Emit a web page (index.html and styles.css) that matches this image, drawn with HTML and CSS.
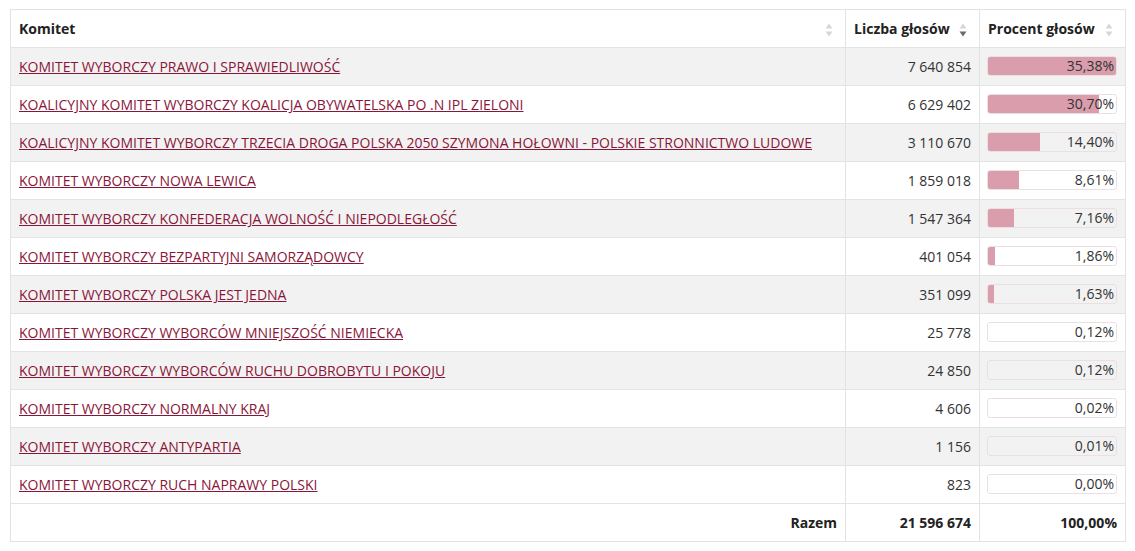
FILE: index.html
```html
<!DOCTYPE html>
<html lang="pl">
<head>
<meta charset="utf-8">
<title>Wyniki</title>
<link rel="stylesheet" href="styles.css">
</head>
<body>
<div class="wrap">
<table class="results">
  <colgroup>
    <col class="c-name">
    <col class="c-votes">
    <col class="c-pct">
  </colgroup>
  <thead>
    <tr>
      <th>Komitet<span class="sort"><svg viewBox="0 0 8 14" width="8" height="14"><path d="M4 0.5 L7.5 5.5 L0.5 5.5 Z" fill="#d7d7d7"/><path d="M4 13.5 L7.5 8.5 L0.5 8.5 Z" fill="#d7d7d7"/></svg></span></th>
      <th>Liczba głosów<span class="sort"><svg viewBox="0 0 8 14" width="8" height="14"><path d="M4 0.5 L7.5 5.5 L0.5 5.5 Z" fill="#d7d7d7"/><path d="M4 13.5 L7.5 8.5 L0.5 8.5 Z" fill="#6b6b6b"/></svg></span></th>
      <th>Procent głosów<span class="sort"><svg viewBox="0 0 8 14" width="8" height="14"><path d="M4 0.5 L7.5 5.5 L0.5 5.5 Z" fill="#d7d7d7"/><path d="M4 13.5 L7.5 8.5 L0.5 8.5 Z" fill="#d7d7d7"/></svg></span></th>
    </tr>
  </thead>
  <tbody>
    <tr><td><a href="#">KOMITET WYBORCZY PRAWO I SPRAWIEDLIWOŚĆ</a></td><td class="num">7 640 854</td><td class="pct"><div class="bar"><div class="fill" style="width:100%"></div><span>35,38%</span></div></td></tr>
    <tr><td><a href="#">KOALICYJNY KOMITET WYBORCZY KOALICJA OBYWATELSKA PO .N IPL ZIELONI</a></td><td class="num">6 629 402</td><td class="pct"><div class="bar"><div class="fill" style="width:86.77%"></div><span>30,70%</span></div></td></tr>
    <tr><td><a href="#">KOALICYJNY KOMITET WYBORCZY TRZECIA DROGA POLSKA 2050 SZYMONA HOŁOWNI - POLSKIE STRONNICTWO LUDOWE</a></td><td class="num">3 110 670</td><td class="pct"><div class="bar"><div class="fill" style="width:40.70%"></div><span>14,40%</span></div></td></tr>
    <tr><td><a href="#">KOMITET WYBORCZY NOWA LEWICA</a></td><td class="num">1 859 018</td><td class="pct"><div class="bar"><div class="fill" style="width:24.34%"></div><span>8,61%</span></div></td></tr>
    <tr><td><a href="#">KOMITET WYBORCZY KONFEDERACJA WOLNOŚĆ I NIEPODLEGŁOŚĆ</a></td><td class="num">1 547 364</td><td class="pct"><div class="bar"><div class="fill" style="width:20.24%"></div><span>7,16%</span></div></td></tr>
    <tr><td><a href="#">KOMITET WYBORCZY BEZPARTYJNI SAMORZĄDOWCY</a></td><td class="num">401 054</td><td class="pct"><div class="bar"><div class="fill" style="width:5.26%"></div><span>1,86%</span></div></td></tr>
    <tr><td><a href="#">KOMITET WYBORCZY POLSKA JEST JEDNA</a></td><td class="num">351 099</td><td class="pct"><div class="bar"><div class="fill" style="width:4.61%"></div><span>1,63%</span></div></td></tr>
    <tr><td><a href="#">KOMITET WYBORCZY WYBORCÓW MNIEJSZOŚĆ NIEMIECKA</a></td><td class="num">25 778</td><td class="pct"><div class="bar"><div class="fill" style="width:0%"></div><span>0,12%</span></div></td></tr>
    <tr><td><a href="#">KOMITET WYBORCZY WYBORCÓW RUCHU DOBROBYTU I POKOJU</a></td><td class="num">24 850</td><td class="pct"><div class="bar"><div class="fill" style="width:0%"></div><span>0,12%</span></div></td></tr>
    <tr><td><a href="#">KOMITET WYBORCZY NORMALNY KRAJ</a></td><td class="num">4 606</td><td class="pct"><div class="bar"><div class="fill" style="width:0%"></div><span>0,02%</span></div></td></tr>
    <tr><td><a href="#">KOMITET WYBORCZY ANTYPARTIA</a></td><td class="num">1 156</td><td class="pct"><div class="bar"><div class="fill" style="width:0%"></div><span>0,01%</span></div></td></tr>
    <tr><td><a href="#">KOMITET WYBORCZY RUCH NAPRAWY POLSKI</a></td><td class="num">823</td><td class="pct"><div class="bar"><div class="fill" style="width:0%"></div><span>0,00%</span></div></td></tr>
  </tbody>
  <tfoot>
    <tr><td class="num total">Razem</td><td class="num total">21 596 674</td><td class="num total">100,00%</td></tr>
  </tfoot>
</table>
</div>
</body>
</html>
```
FILE: styles.css
```css
html, body {
  margin: 0;
  padding: 0;
  background: #fff;
}
body {
  font-family: "Open Sans", "Liberation Sans", sans-serif;
  font-size: 14px;
  line-height: 20px;
  color: #333;
}
.wrap {
  padding: 9px 10px;
}
.results {
  width: 1115px;
  border-collapse: collapse;
  table-layout: fixed;
  border: 1px solid #e3e3e3;
}
.c-name { width: 835px; }
.c-votes { width: 134px; }
.c-pct { width: 146px; }
.results th,
.results td {
  padding: 9px 8px 8px;
  line-height: 20px;
  border: 1px solid #e3e3e3;
  border-left: 0;
  border-right: 0;
  vertical-align: middle;
  white-space: nowrap;
}
.results th + th,
.results td + td {
  border-left: 1px solid #e3e3e3;
}
.results th {
  font-weight: 700;
  color: #222;
  text-align: left;
  position: relative;
  padding-right: 26px;
}
.sort {
  position: absolute;
  right: 12px;
  top: 13px;
  line-height: 0;
}
.results tbody tr:nth-child(odd) td {
  background: #f2f2f2;
}
.results a {
  color: #8a1538;
  text-decoration: underline;
}
.num {
  text-align: right;
}
.results td.pct {
  padding: 8px 8px 9px 7px;
}
.bar {
  position: relative;
  height: 20px;
  border: 1px solid #ecdfe3;
  border-radius: 3px;
  background: #fff;
  box-sizing: border-box;
  overflow: hidden;
}
.results tbody tr:nth-child(odd) .bar {
  background: transparent;
}
.fill {
  position: absolute;
  left: 0;
  top: 0;
  bottom: 0;
  background: #d99dab;
}
.bar span {
  position: relative;
  display: block;
  text-align: right;
  padding-right: 2px;
  line-height: 18px;
  color: #333;
}
.total {
  font-weight: 700;
  color: #222;
}
```
